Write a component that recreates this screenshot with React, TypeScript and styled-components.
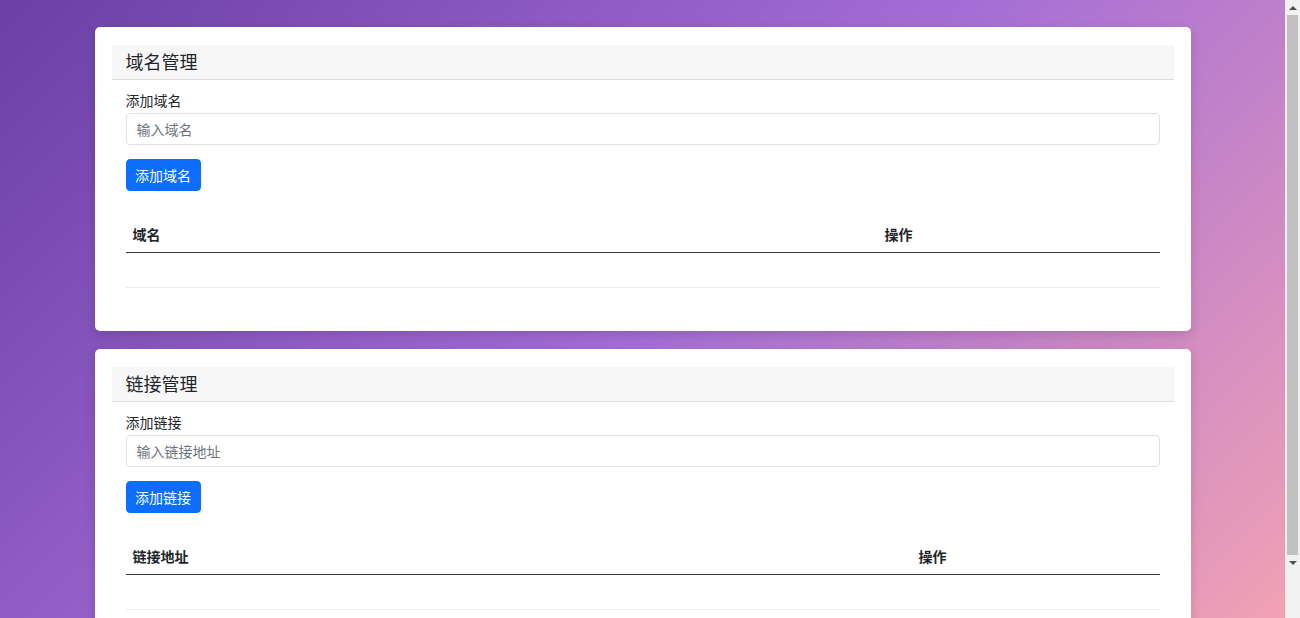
import styled, { createGlobalStyle } from 'styled-components'

const GlobalStyle = createGlobalStyle`
    html, body {
        margin: 0;
        padding: 0;
    }
    body {
        font-family: "Noto Sans CJK SC", "Liberation Sans", sans-serif;
        font-size: 14px;
        color: #212529;
    }
    * {
        box-sizing: border-box;
    }
`

interface Section {
    title: string
    label: string
    placeholder: string
    button: string
    column: string
    columnWidth: number
}

const sections: Section[] = [
    { title: '域名管理', label: '添加域名', placeholder: '输入域名', button: '添加域名', column: '域名', columnWidth: 752 },
    { title: '链接管理', label: '添加链接', placeholder: '输入链接地址', button: '添加链接', column: '链接地址', columnWidth: 786 },
]

export default function App() {
    return (
        <>
            <GlobalStyle />
            <Page>
                {sections.map((s) => (
                    <Card key={s.title}>
                        <CardHeader>{s.title}</CardHeader>
                        <CardBody>
                            <Label>{s.label}</Label>
                            <Input placeholder={s.placeholder} />
                            <Button>{s.button}</Button>
                            <Table>
                                <colgroup>
                                    <col style={{ width: s.columnWidth }} />
                                    <col />
                                </colgroup>
                                <thead>
                                    <tr>
                                        <Th>{s.column}</Th>
                                        <Th>操作</Th>
                                    </tr>
                                </thead>
                                <tbody>
                                    <EmptyRow>
                                        <Td />
                                        <Td />
                                    </EmptyRow>
                                </tbody>
                            </Table>
                        </CardBody>
                    </Card>
                ))}
            </Page>
            {/* classic browser scrollbar, as it shows in the screenshot */}
            <ScrollTrack>
                <Arrow $up />
                <Thumb />
                <Arrow />
            </ScrollTrack>
        </>
    )
}

const Page = styled.div`
    width: calc(100% - 15px);
    min-height: 100vh;
    padding: 27px 0;
    display: flex;
    flex-direction: column;
    align-items: center;
    gap: 18px;
    background: linear-gradient(135deg, #6a3fa6 0%, #a56ed6 50%, #f6a5b2 100%);
`

const ScrollTrack = styled.div`
    position: fixed;
    top: 0;
    right: 0;
    width: 15px;
    height: 100vh;
    background: #f1f1f1;
    display: flex;
    flex-direction: column;
    align-items: center;
`

const Arrow = styled.div<{ $up?: boolean }>`
    flex: none;
    height: 15px;
    width: 15px;
    display: flex;
    align-items: center;
    justify-content: center;

    &::before {
        content: '';
        border-left: 4px solid transparent;
        border-right: 4px solid transparent;
        ${(p) => (p.$up ? 'border-bottom: 4px solid #505050;' : 'border-top: 4px solid #505050;')}
    }
`

const Thumb = styled.div`
    width: 11px;
    height: 540px;
    background: #c1c1c1;
`

const Card = styled.div`
    width: 1096px;
    background: #fff;
    border-radius: 5px;
    padding: 18px 17px 17px;
    box-shadow: 0 4px 12px rgba(0, 0, 0, 0.14);
`

const CardHeader = styled.div`
    height: 35px;
    padding: 0 14px 2px;
    display: flex;
    align-items: center;
    background: #f7f7f7;
    border-bottom: 1px solid #dcdcdc;
    font-size: 18px;
    color: #212529;
`

const CardBody = styled.div`
    padding: 10px 14px 0 14px;
    display: flex;
    flex-direction: column;
`

const Label = styled.label`
    font-size: 14px;
    line-height: 21px;
    margin-bottom: 2px;
`

const Input = styled.input`
    height: 32px;
    width: 100%;
    padding: 0 10px;
    border: 1px solid #dee2e6;
    border-radius: 4px;
    font-family: inherit;
    font-size: 14px;
    color: #212529;
    outline: none;

    &::placeholder {
        color: #6c757d;
    }
`

const Button = styled.button`
    align-self: flex-start;
    margin-top: 14px;
    height: 32px;
    padding: 0 8.5px;
    border: 1px solid #0d6efd;
    border-radius: 4px;
    background: #0d6efd;
    color: #fff;
    font-family: inherit;
    font-size: 14px;
    cursor: pointer;
`

const Table = styled.table`
    width: 100%;
    margin-top: 24px;
    margin-bottom: 26px;
    border-collapse: collapse;
    table-layout: fixed;
`

const Th = styled.th`
    text-align: left;
    font-weight: 700;
    font-size: 14px;
    line-height: 21px;
    padding: 9px 7px 7px;
    border-bottom: 1px solid #3a3a40;
`

const EmptyRow = styled.tr`
    height: 35px;
`

const Td = styled.td`
    padding: 8px;
    border-bottom: 1px solid #ececec;
`
